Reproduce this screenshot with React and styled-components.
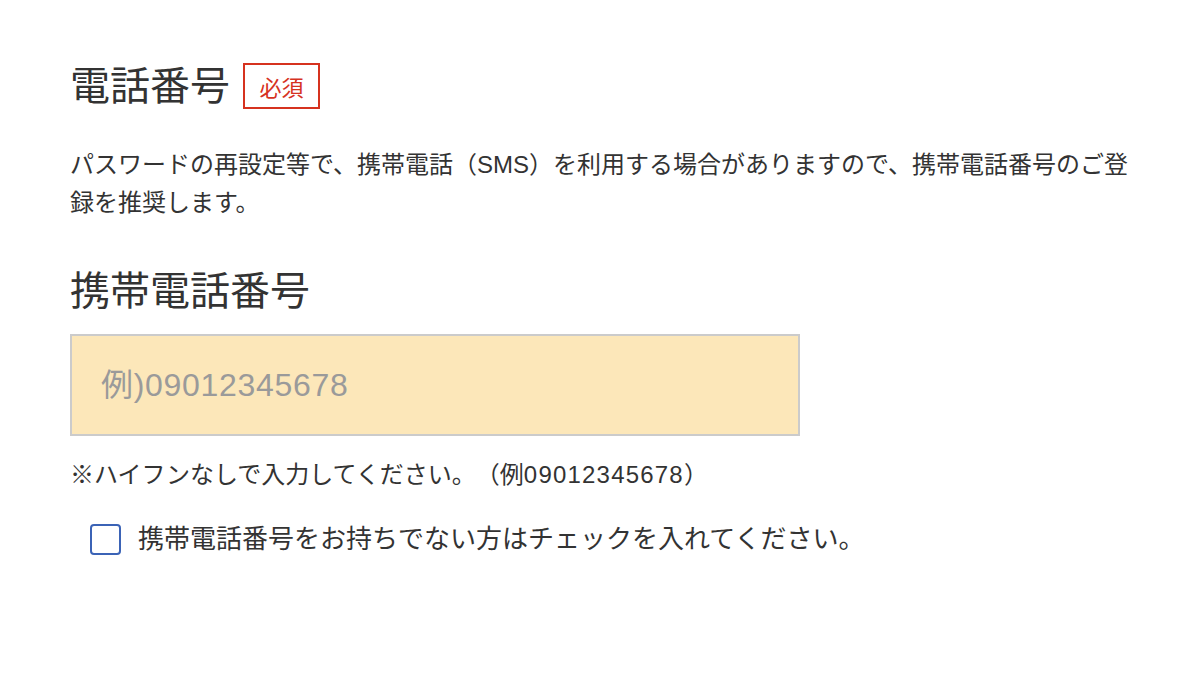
import React from "react";
import styled, { createGlobalStyle } from "styled-components";

const GlobalStyle = createGlobalStyle`
  body {
    margin: 0;
    background: #fff;
    font-family: "Liberation Sans", "Noto Sans CJK JP", sans-serif;
    color: #333;
    text-spacing-trim: space-all;
  }
`;

const Page = styled.div`
  width: 1062px;
  padding: 62px 0 0 70px;
`;

const TitleRow = styled.div`
  display: flex;
  align-items: center;
  gap: 13px;
  height: 48px;
`;

const Title = styled.h2`
  margin: 0;
  font-size: 40px;
  line-height: 48px;
  font-weight: 400;
  color: #333;
`;

const Required = styled.span`
  display: flex;
  align-items: center;
  justify-content: center;
  box-sizing: border-box;
  width: 77px;
  height: 46px;
  border: 2px solid #d6321f;
  color: #d6321f;
  font-size: 22px;
`;

const Lead = styled.p`
  margin: 36px 0 0;
  font-size: 24px;
  line-height: 38px;
`;

const Label = styled.h3`
  margin: 45px 0 0;
  font-size: 40px;
  line-height: 48px;
  font-weight: 400;
`;

const PhoneInput = styled.input`
  display: block;
  box-sizing: border-box;
  width: 730px;
  height: 102px;
  margin-top: 19px;
  padding: 0 0 0 29px;
  border: 2px solid #cbcbcb;
  background: #fce7b9;
  font-family: inherit;
  font-size: 32px;
  letter-spacing: 0.7px;
  color: #333;
  outline: none;
  &::placeholder {
    color: #9a9a9a;
  }
`;

const Note = styled.p`
  margin: 21px 0 0;
  font-size: 24px;
  line-height: 36px;
`;

const Digits = styled.span`
  letter-spacing: 1.2px;
`;

const CheckRow = styled.label`
  display: flex;
  align-items: center;
  gap: 17px;
  margin-top: 28px;
  padding-left: 20px;
  font-size: 26px;
  line-height: 36px;
  cursor: pointer;
`;

const Box = styled.span`
  box-sizing: border-box;
  width: 31px;
  height: 31px;
  border: 2px solid #3b63b6;
  border-radius: 4px;
  background: #fff;
  flex-shrink: 0;
`;

export default function App() {
  return (
    <>
      <GlobalStyle />
      <Page>
        <TitleRow>
          <Title>電話番号</Title>
          <Required>必須</Required>
        </TitleRow>
        <Lead>
          パスワードの再設定等で、携帯電話（SMS）を利用する場合がありますので、携帯電話番号のご登録を推奨します。
        </Lead>
        <Label>携帯電話番号</Label>
        <PhoneInput type="tel" placeholder="例)09012345678" />
        <Note>
          ※ハイフンなしで入力してください。（例<Digits>09012345678</Digits>）
        </Note>
        <CheckRow>
          <Box />
          携帯電話番号をお持ちでない方はチェックを入れてください。
        </CheckRow>
      </Page>
    </>
  );
}
